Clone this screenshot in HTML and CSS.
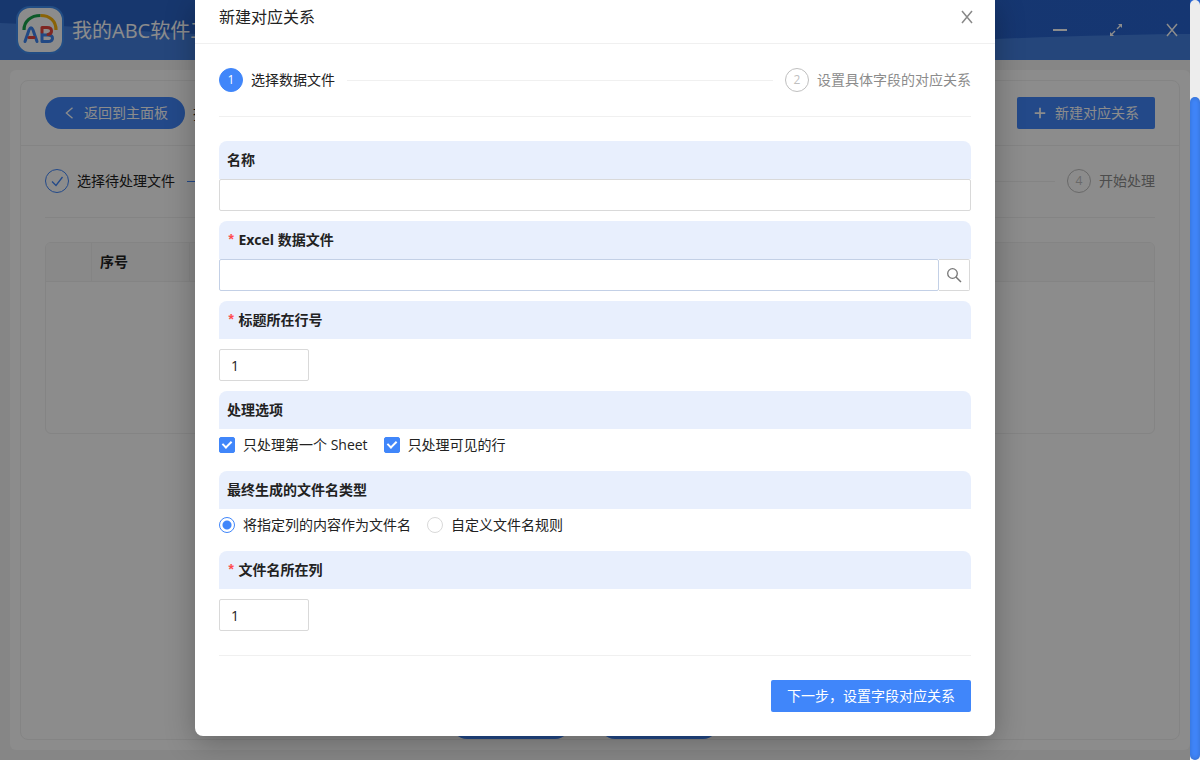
FILE: index.html
```html
<!DOCTYPE html>
<html lang="zh-CN">
<head>
<meta charset="utf-8">
<title>新建对应关系</title>
<meta name="viewport" content="width=device-width, initial-scale=1">
<link rel="stylesheet" href="styles.css">
</head>
<body>
<div class="app">
  <header class="topbar">
    <svg class="topbar-wave" viewBox="0 0 1200 60" preserveAspectRatio="none" aria-hidden="true">
      <path d="M0 23 C60 25 120 31 220 35 C500 48 800 42 995 39 C1070 36 1140 34 1200 34 V60 H0Z"/>
    </svg>
    <div class="brand">
      <svg class="logo" viewBox="0 0 48 48" aria-hidden="true">
        <rect x="1" y="1" width="46" height="46" rx="13" fill="#fff" stroke="#3f8cf0" stroke-width="2"/>
        <g fill="none" stroke-width="3.2">
          <path d="M8 24 C8 15 15 9.500 24.500 9.500" stroke="#16a34a"/>
          <path d="M24.500 9.500 C34 9.500 40 15 40 24" stroke="#fbb50b"/>
        </g>
        <g fill="none" stroke-width="3" stroke-linecap="round" stroke-linejoin="round">
          <path d="M9 35.500 L13 24 Q15 19.500 17 24 L21 35.500" stroke="#3f86f0"/>
          <path d="M13 31.500 H18" stroke="#e8453c"/>
          <path d="M26 29 H32 Q36.500 29 36.500 32.200 Q36.500 35.500 32 35.500 H26 V27" stroke="#3f86f0"/>
          <path d="M26 26 V21.500 H31 Q35.500 21.500 35.500 25 Q35.500 28 32 28.500" stroke="#e8453c"/>
        </g>
      </svg>
      <span class="brand-name">我的ABC软件工</span>
    </div>
    <div class="window-tools">
      <button class="tool" type="button" aria-label="最小化"><svg viewBox="0 0 16 16"><path d="M1 8H15" stroke-width="2"/></svg></button>
      <button class="tool" type="button" aria-label="最大化"><svg viewBox="0 0 16 16"><path d="M9 7L12.500 3.500M7 9L3.500 12.500" stroke-width="1.300"/><path d="M14 2V6L10 2ZM2 14V10L6 14Z" fill="currentColor" stroke="none"/></svg></button>
      <button class="tool" type="button" aria-label="关闭窗口"><svg viewBox="0 0 16 16"><path d="M3 2L13 14M13 2L3 14" stroke-width="1.500"/></svg></button>
    </div>
  </header>
  <main class="page">
    <section class="panel">
      <div class="panel-head">
        <button class="btn btn-round btn-back" type="button"><svg class="icon-small" viewBox="0 0 16 16"><path d="M12 2L5 8L12 14" stroke-width="1.500"/></svg>返回到主面板</button>
        <span class="panel-title">批</span>
        <button class="btn btn-new" type="button"><svg class="icon-small" viewBox="0 0 16 16"><path d="M8 2V14M2 8H14" stroke-width="2"/></svg>新建对应关系</button>
      </div>
      <div class="panel-body">
        <ol class="steps">
          <li class="step step-done"><span class="dot"><svg class="icon" viewBox="0 0 16 16"><path d="M3 8.500L7 12.500L13.500 4" stroke-width="1.300"/></svg></span>选择待处理文件</li>
          <li class="step step-wait"><span class="dot">4</span>开始处理</li>
        </ol>
        <div class="table-box">
          <table class="table">
            <thead><tr><th class="col-check"></th><th class="col-index">序号</th><th></th></tr></thead>
          </table>
        </div>
      </div>
      <div class="panel-foot">
        <button class="btn btn-round btn-foot" type="button" aria-label="上一步"></button>
        <button class="btn btn-round btn-foot" type="button" aria-label="下一步"></button>
      </div>
    </section>
  </main>
</div>
<div class="mask">
  <div class="dialog" role="dialog" aria-labelledby="dialog-title">
    <div class="dialog-head">
      <h1 class="dialog-title" id="dialog-title">新建对应关系</h1>
      <button class="close" type="button" aria-label="关闭"><svg viewBox="0 0 16 16"><path d="M3 2L13 14M13 2L3 14" stroke-width="1.500"/></svg></button>
    </div>
    <form class="dialog-body">
      <ol class="steps">
        <li class="step step-active"><span class="dot">1</span>选择数据文件</li>
        <li class="step step-wait"><span class="dot">2</span>设置具体字段的对应关系</li>
      </ol>
      <div class="field">
        <label class="field-label" for="name">名称</label>
        <input class="input" id="name" type="text">
      </div>
      <div class="field">
        <label class="field-label required" for="file">Excel 数据文件</label>
        <div class="search">
          <input class="input" id="file" type="text">
          <button class="search-btn" type="button" aria-label="浏览"><svg class="icon" viewBox="0 0 16 16"><circle cx="6.500" cy="6.500" r="4.800" stroke-width="1.300"/><path d="M10 10L15 15" stroke-width="1.500"/></svg></button>
        </div>
      </div>
      <div class="field">
        <label class="field-label required" for="row">标题所在行号</label>
        <input class="input input-number" id="row" type="text" value="1">
      </div>
      <fieldset class="field">
        <legend class="field-label">处理选项</legend>
        <div class="choices">
          <label class="choice"><input class="check" type="checkbox" checked>只处理第一个 Sheet</label>
          <label class="choice"><input class="check" type="checkbox" checked>只处理可见的行</label>
        </div>
      </fieldset>
      <fieldset class="field">
        <legend class="field-label">最终生成的文件名类型</legend>
        <div class="choices">
          <label class="choice"><input class="radio" type="radio" name="kind" checked>将指定列的内容作为文件名</label>
          <label class="choice"><input class="radio" type="radio" name="kind">自定义文件名规则</label>
        </div>
      </fieldset>
      <div class="field">
        <label class="field-label required" for="col">文件名所在列</label>
        <input class="input input-number" id="col" type="text" value="1">
      </div>
      <div class="dialog-foot">
        <button class="btn" type="button">下一步，设置字段对应关系</button>
      </div>
    </form>
  </div>
</div>
<div class="scrollbar" aria-hidden="true"><div class="scrollbar-thumb"></div></div>
</body>
</html>
```
FILE: styles.css
```css
* { box-sizing: border-box; }
body {
  margin: 0;
  height: 100vh;
  overflow: hidden;
  color: #222;
  font: 14px/22px "Open Sans", "Noto Sans CJK SC", sans-serif;
}
button, input { font: inherit; color: inherit; }
button { cursor: pointer; }
svg { display: block; fill: none; stroke: currentColor; }
.icon { width: 16px; height: 16px; }
.icon-small { width: 14px; height: 14px; }

.app { display: flex; flex-direction: column; height: 100vh; background: #f5f5f5; }
.topbar {
  position: relative;
  flex: none;
  display: flex;
  align-items: center;
  justify-content: space-between;
  height: 60px;
  padding: 0 20px 0 16px;
  color: #fff;
  background: linear-gradient(90deg, #2b65c8, #2763cf);
}
.topbar-wave { position: absolute; inset: 0; width: 100%; height: 100%; fill: #4480e0; stroke: none; }
.brand { position: relative; display: flex; align-items: center; gap: 8px; font-size: 20px; }
.brand-name { padding-top: 2px; }
.logo { width: 48px; height: 48px; }
.window-tools { position: relative; display: flex; gap: 40px; }
.tool, .close { padding: 0; border: 0; background: none; }
.tool svg, .close svg { width: 16px; height: 16px; }

.page { flex: 1; display: flex; margin: 10px; padding: 10px; border-radius: 6px; background: #fff; }
.panel { flex: 1; display: flex; flex-direction: column; border: 1px solid #f0f0f0; border-radius: 8px; }
.panel-head {
  display: flex;
  align-items: center;
  gap: 8px;
  padding: 16px 24px;
  border-bottom: 1px solid #f0f0f0;
}
.panel-title { font-size: 16px; }
.panel-body { flex: 1; padding: 23px 24px 24px; }
.panel-foot { display: flex; justify-content: center; gap: 28px; padding-right: 30px; }

.btn {
  display: inline-flex;
  align-items: center;
  justify-content: center;
  gap: 8px;
  height: 32px;
  padding: 0 16px;
  border: 0;
  border-radius: 2px;
  color: #fff;
  background: #4086fa;
}
.btn-round { border-radius: 16px; }
.btn-back { padding: 0 17px; }
.btn-foot { width: 120px; }
.btn-new { margin-left: auto; }

.steps {
  display: flex;
  margin: 0 0 24px;
  padding: 0 0 24px;
  border-bottom: 1px solid #f0f0f0;
  list-style: none;
}
.step { display: flex; align-items: center; gap: 8px; }
.step:first-child { flex: 1; }
.step:first-child::after { content: ""; flex: 1; height: 1px; margin: 0 12px 0 4px; background: #f0f0f0; }
.step.step-done::after { background: linear-gradient(90deg, #4086fa 50%, #f0f0f0 50%); }
.step-wait { color: #8c8c8c; }
.dot {
  display: flex;
  align-items: center;
  justify-content: center;
  width: 24px;
  height: 24px;
  border: 1px solid #bfbfbf;
  border-radius: 50%;
  color: #bfbfbf;
  font-size: 12px;
}
.step-active .dot { border-color: #4086fa; color: #fff; background: #4086fa; }
.step-done .dot { border-color: #4086fa; color: #4086fa; }

.table-box { min-height: 192px; border: 1px solid #f0f0f0; border-radius: 6px; overflow: hidden; }
.table { width: 100%; border-collapse: separate; border-spacing: 0; table-layout: fixed; }
.table th { height: 39px; padding: 0 8px; border-right: 1px solid #f0f0f0; border-bottom: 1px solid #f0f0f0; background: #fafafa; text-align: left; }
.table th:last-child { border-right: 0; }
.col-check { width: 46px; }
.col-index { width: 98px; }

.mask { position: absolute; inset: 0 10px 0 0; overflow: hidden; background: rgba(0, 0, 0, 0.45); }
.dialog {
  width: 800px;
  max-width: 100%;
  margin: 0 auto;
  border-radius: 0 0 8px 8px;
  background: #fff;
  box-shadow: 0 6px 30px rgba(0, 0, 0, 0.28);
}
.dialog-head { display: flex; align-items: center; justify-content: space-between; height: 44px; padding: 0 20px 10px 24px; border-bottom: 1px solid #f0f0f0; }
.dialog-title { margin: 0; font-size: 16px; line-height: 22px; font-weight: 400; }
.close { color: #888; }
.dialog-body { padding: 24px; }

.field { margin: 0 0 10px; padding: 0; border: 0; }
.field-label {
  display: block;
  width: 100%;
  padding: 8px;
  border-radius: 8px 8px 0 0;
  background: #e8effd;
  font-weight: 700;
}
.required::before { content: "*"; margin-right: 3px; color: #ff4d4f; font-family: "Liberation Mono", monospace; line-height: 1; }
.input { display: block; width: 100%; height: 32px; padding: 4px 11px; border: 1px solid #d9d9d9; border-radius: 2px; background: #fff; outline: 0; }
.input-number { width: 90px; margin-top: 10px; }
.search { display: flex; }
.search .input { border-color: #c3d0e6; }
.search-btn { flex: none; width: 31px; height: 32px; padding: 0 7px; margin-right: 1px; border: 1px solid #d9d9d9; border-left: 0; border-radius: 0 2px 2px 0; color: #777; background: #fff; }

.choices { display: flex; gap: 16px; height: 32px; align-items: center; }
.choice { display: flex; align-items: center; gap: 8px; }
.check, .radio { appearance: none; width: 16px; height: 16px; margin: 0; border: 1px solid #d9d9d9; background: #fff; }
.check { border-radius: 2px; }
.radio { border-radius: 50%; }
.check:checked { position: relative; border-color: #4086fa; background: #4086fa; }
.check:checked::after { content: ""; position: absolute; left: 4px; top: 1px; width: 4px; height: 7px; border: solid #fff; border-width: 0 2px 2px 0; transform: rotate(45deg); }
.radio:checked { border-color: #4086fa; background: radial-gradient(circle, #4086fa 4px, #fff 5px); }
.dialog-foot { display: flex; justify-content: flex-end; margin-top: 24px; padding-top: 24px; border-top: 1px solid #f0f0f0; }

.scrollbar { position: absolute; top: 0; right: 0; bottom: 0; width: 10px; padding-top: 97px; border-radius: 5px; background: #ededed; }
.scrollbar-thumb { height: 100%; border-radius: 5px; background: #4086fa; box-shadow: inset 0 0 5px rgba(0, 0, 0, 0.2); }
```
